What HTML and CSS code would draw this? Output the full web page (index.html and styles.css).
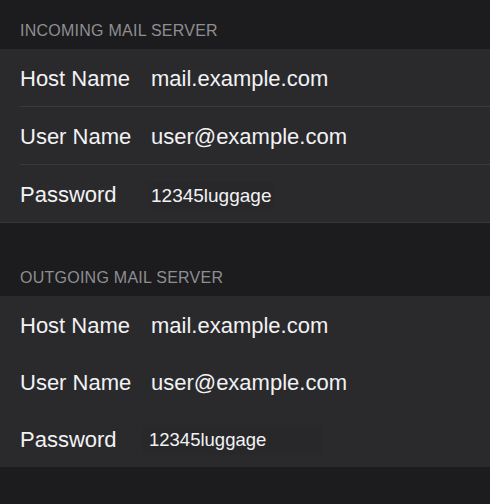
FILE: index.html
```html
<!DOCTYPE html>
<html lang="en">

<head>
    <meta charset="UTF-8">
    <meta name="viewport" content="width=device-width, initial-scale=1.0">
    <title>Mail Server Settings</title>
    <link rel="stylesheet" href="styles.css">
</head>

<body>
    <div class="section">
        <h2 class="section-title">INCOMING MAIL SERVER</h2>
        <div class="group">
            <div class="row">
                <span class="label">Host Name</span>
                <span class="value">mail.example.com</span>
            </div>
            <div class="row">
                <span class="label">User Name</span>
                <span class="value">user@example.com</span>
            </div>
            <div class="row">
                <span class="label">Password</span>
                <span class="value secret">12345luggage</span>
            </div>
        </div>
    </div>

    <div class="section outgoing">
        <h2 class="section-title">OUTGOING MAIL SERVER</h2>
        <div class="group plain">
            <div class="row">
                <span class="label">Host Name</span>
                <span class="value">mail.example.com</span>
            </div>
            <div class="row">
                <span class="label">User Name</span>
                <span class="value">user@example.com</span>
            </div>
            <div class="row">
                <span class="label">Password</span>
                <span class="value secret wide">12345luggage</span>
            </div>
        </div>
    </div>
</body>

</html>
```

FILE: styles.css
```css
body {
    font-family: "Liberation Sans", Arial, sans-serif;
    margin: 0;
    padding: 0;
    background-color: #1c1c1e;
    color: #f2f2f4;
    height: 504px;
    overflow: hidden;
}

.section-title {
    margin: 0;
    padding: 21px 20px 8px;
    font-size: 16px;
    line-height: 20px;
    font-weight: normal;
    letter-spacing: 0.25px;
    color: #8e8e93;
}

.outgoing {
    margin-top: 24px;
}

.group {
    background-color: #2a2a2d;
    border-bottom: 1px solid #37373a;
}

.group.plain {
    border-bottom: none;
}

.row {
    display: flex;
    align-items: center;
    height: 57px;
    margin-left: 20px;
    padding-top: 3px;
    box-sizing: border-box;
}

.group .row + .row {
    border-top: 1px solid #3a3a3d;
    height: 58px;
}

.group.plain .row + .row {
    border-top: none;
    height: 57px;
}

.label {
    width: 131px;
    flex-shrink: 0;
    font-size: 22px;
}

.value {
    font-size: 22px;
}

.secret {
    font-size: 19px;
    line-height: 27px;
    padding: 0 3px;
    margin-left: -3px;
    width: 119px;
    background-color: #28282a;
}

.secret.wide {
    font-size: 18.5px;
    line-height: 30px;
    padding: 0 0 0 6px;
    margin-left: -8px;
    width: 174px;
}
```
